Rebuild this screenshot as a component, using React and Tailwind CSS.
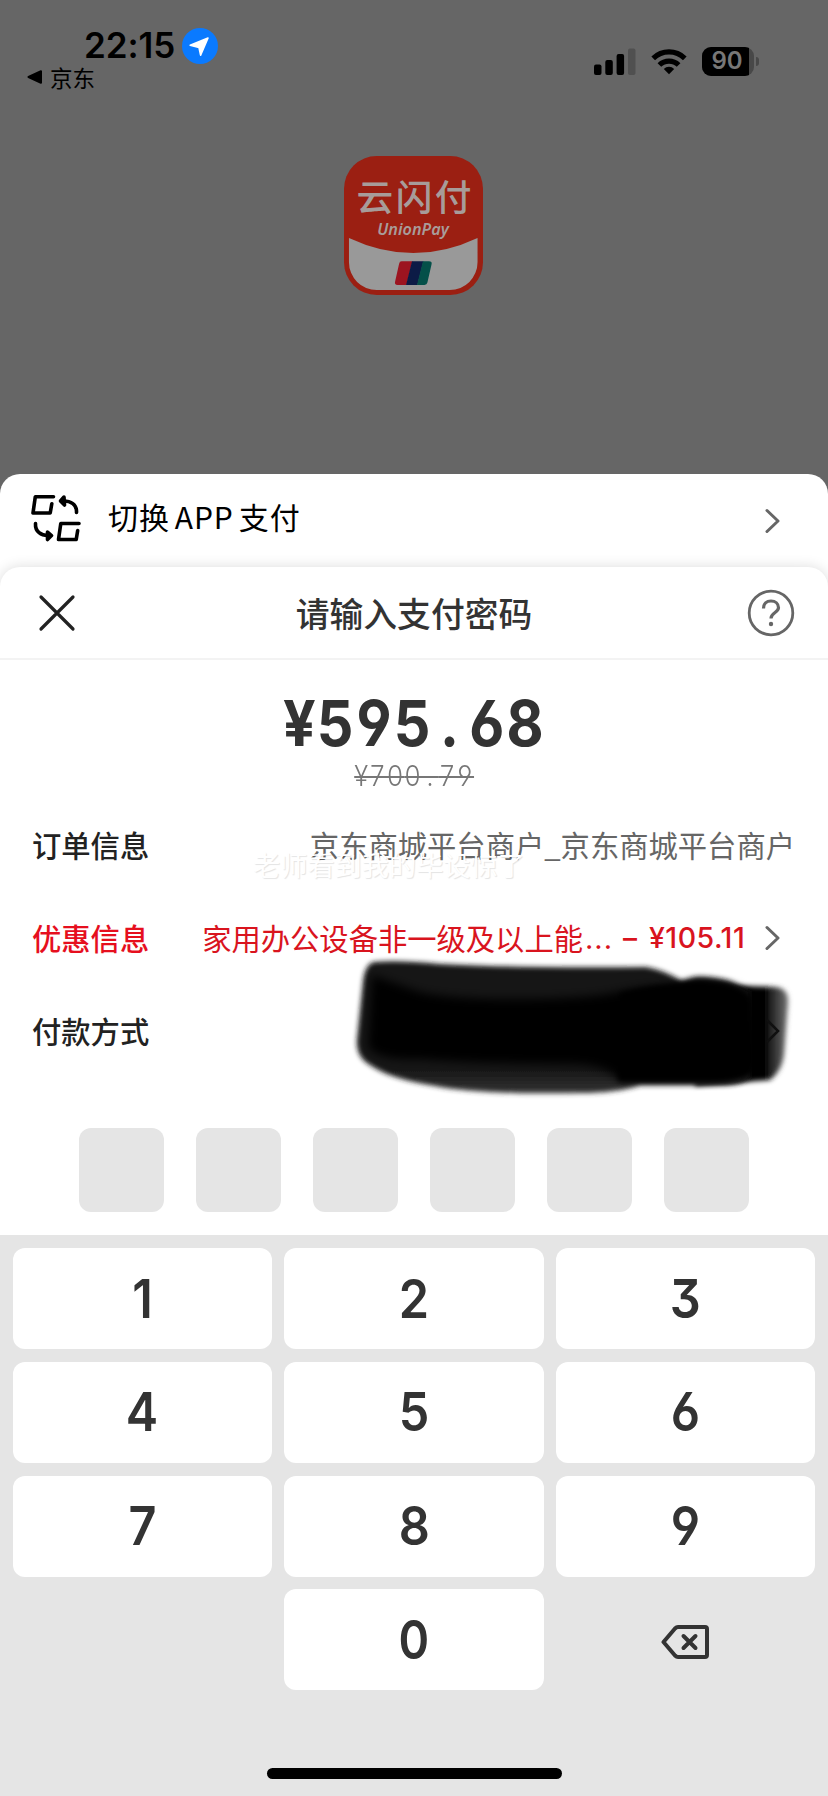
const PIN_SLOTS = [0, 1, 2, 3, 4, 5];
const KEYS = ['1', '2', '3', '4', '5', '6', '7', '8', '9'];

function Chevron({ className = '' }) {
  return (
    <svg viewBox="0 0 16 26" fill="none" stroke="currentColor" strokeWidth="3" strokeLinecap="round" strokeLinejoin="round" className={`w-4 h-[26px] shrink-0 ${className}`}>
      <path d="M2 2.5 13 13 2 23.5" />
    </svg>
  );
}

function StatusBar() {
  return (
    <div className="relative flex justify-between h-[110px] text-black">
      <div className="pl-[27px] pt-[24px]">
        <div className="flex items-center h-[43px] pl-[57px]">
          <span className="w-[93px] font-['Inter'] font-semibold text-[35px] leading-none tracking-[-0.1px]">22:15</span>
          <svg viewBox="0 0 36 36" className="w-9 h-9 ml-[5px]">
            <circle cx="18" cy="18" r="18" fill="#0a7aff" />
            <path d="M26 10 18.6 27.2 17 19.6 8.2 17.2Z" fill="#fff" stroke="#fff" strokeWidth="1.6" strokeLinejoin="round" />
          </svg>
        </div>
        <div className="flex items-center h-[20px]">
          <svg viewBox="0 0 16 14" className="w-4 h-3.5">
            <path d="M1.5 7 14 1.2V12.8Z" stroke="#000" strokeWidth="2" strokeLinejoin="round" />
          </svg>
          <span className="ml-[7px] text-[22.5px] leading-none">京东</span>
        </div>
      </div>
      <div className="flex items-center h-[30px] mt-[46px] mr-[69px]">
        <svg viewBox="0 0 42 27" className="w-[42px] h-[27px]">
          <rect x="0" y="16.5" width="7.5" height="10.5" rx="2" />
          <rect x="11.3" y="12" width="7.5" height="15" rx="2" />
          <rect x="22.6" y="6" width="7.5" height="21" rx="2" />
          <rect x="34" y="0.5" width="7.5" height="26.5" rx="2" fill="#505050" />
        </svg>
        <svg viewBox="0 0 36 27" fill="none" stroke="#000" strokeWidth="5.2" className="w-9 h-[27px] ml-[15px]">
          <path d="M2.2 10.4a22.6 22.6 0 0 1 31.6 0" />
          <path d="M8.4 17a13.8 13.8 0 0 1 19.2 0" />
          <path d="M18 26.2l-5.2-5.3a7.4 7.4 0 0 1 10.4 0z" fill="#000" stroke="none" />
        </svg>
        <div className="flex items-center ml-[15px]">
          <div className="w-[52px] h-[29px] rounded-[9px] overflow-hidden bg-[#484848]">
            <div className="w-[47px] h-full bg-black flex items-center justify-center pl-[3px] text-[#777] font-['Inter'] font-semibold text-[24px] leading-none tracking-[-0.2px]">90</div>
          </div>
          <div className="w-[3px] h-[9px] ml-[2px] rounded-r-full bg-[#484848]" />
        </div>
      </div>
    </div>
  );
}

function Logo() {
  return (
    <svg viewBox="0 0 140 140" className="w-[139px] h-[139px] ml-[344px] mt-[46px]">
      <rect x="0" y="0" width="140" height="140" rx="33" fill="#9b1f12" />
      <path d="M5 82.5Q70 113 134.5 82.5V107A28 28 0 0 1 106.5 135H33A28 28 0 0 1 5 107Z" fill="#999" />
      <text x="12.5" y="55.5" textLength="116" fontSize="37" fontWeight="500" fill="#a79c9a" fontFamily="Noto Sans CJK SC, sans-serif">云闪付</text>
      <text x="33.5" y="80" textLength="72" lengthAdjust="spacingAndGlyphs" fontSize="17" fontWeight="600" fontStyle="italic" fill="#a99c9a" fontFamily="Noto Sans, sans-serif">UnionPay</text>
      <path d="M58 106H69L63 130H54Q50.5 130 51.5 126.5L55.5 108.5Q56 106 58 106Z" fill="#9c1420" />
      <path d="M68.5 106H80L74 130H62.5Z" fill="#0c1b46" />
      <path d="M79.5 106H85.5Q89 106 88.2 109L84 127.5Q83.5 130 81 130H73.5Z" fill="#045049" />
    </svg>
  );
}

function SwitchIcon() {
  return (
    <svg viewBox="0 0 50 48" fill="none" stroke="#000" strokeWidth="3.6" strokeLinecap="round" strokeLinejoin="round" className="w-[50px] h-12 mb-[6px]">
      <path d="M22.5 2.8H4.3L2 19H19.2L20.8 9.8" />
      <path d="M48 29.5H29.8L27.5 45.500H45.2L46.7 36.5" />
      <path d="M45.5 18.5C46 10.5 40 6.5 31 7" />
      <path d="M33 3 29.500 7 33.500 11Z" fill="#000" />
      <path d="M4.5 29.5C4 37.5 10 42 18 41.5" />
      <path d="M16.5 38 20.500 41.5 16.5 45.500Z" fill="#000" />
    </svg>
  );
}

// Marker strokes that hide the bank card
function Scribble() {
  return (
    <svg viewBox="0 0 450 150" className="absolute left-[350px] top-[955px] w-[450px] h-[150px] pointer-events-none">
      <defs>
        <filter id="soft" x="-10%" y="-10%" width="120%" height="120%"><feGaussianBlur stdDeviation="2.6" /></filter>
        <filter id="softer" x="-10%" y="-20%" width="120%" height="140%"><feGaussianBlur stdDeviation="5" /></filter>
        <linearGradient id="edge" x1="0.75" x2="1">
          <stop offset="0" stopColor="#000" />
          <stop offset="0.4" stopColor="#303030" />
          <stop offset="1" stopColor="#707070" />
        </linearGradient>
        <linearGradient id="band" x1="0" x2="0" y1="0" y2="1">
          <stop offset="0" stopColor="#141414" />
          <stop offset="0.8" stopColor="#141414" />
          <stop offset="1" stopColor="#333" />
        </linearGradient>
      </defs>
      <path d="M345 31Q385 30 425 32Q439 33 438 48L434 100Q432 116 420 125L345 131Z" fill="url(#edge)" filter="url(#soft)" />
      <path d="M24 7Q50 5 90 9Q160 13 296 12Q314 15 332 26L345 22Q360 21 380 26L400 36V122Q392 130 375 130H290Q268 138 230 138Q130 140 85 131Q40 124 20 110Q6 102 7 85L13 27Q15 9 24 7Z" fill="url(#band)" filter="url(#soft)" />
      <path d="M22 20Q50 30 70 37Q100 44 160 44Q230 44 262 38Q300 29 328 31Q345 24 362 28Q390 30 402 42L407 110Q392 125 360 125L270 126Q258 109 220 109Q110 108 70 104Q28 106 18 92Z" fill="#000" filter="url(#softer)" />
      <path d="M270 38Q310 28 345 27Q380 26 398 42L402 118Q388 126 365 126H268Z" fill="#000" filter="url(#soft)" />
      <path d="M417 65 428 76 417 87" fill="none" stroke="#101010" strokeWidth="2.5" />
    </svg>
  );
}

function Row({ label, labelClass, children }) {
  return (
    <div className="flex items-center justify-between h-[93px] pl-8">
      <span className={`pb-[1px] text-[29.3px] leading-none font-medium whitespace-nowrap ${labelClass}`}>{label}</span>
      {children}
    </div>
  );
}

export default function App() {
  return (
    <div className="relative w-[828px] h-[1796px] overflow-hidden bg-[#666] font-['Noto_Sans_CJK_SC',sans-serif]">
      <div className="h-[474px]">
        <StatusBar />
        <Logo />
      </div>

      <div className="h-[1322px] rounded-t-[20px] bg-white overflow-hidden">
        <div className="flex items-center h-[93px] pl-[31px] pr-[47px]">
          <SwitchIcon />
          <span className="ml-[27px] pb-[9px] text-[30px] leading-none tracking-[0.9px] text-black">
            切换<span className="mx-[5px]">APP</span>支付
          </span>
          <Chevron className="ml-auto text-[#666]" />
        </div>

        <div className="h-[668px] rounded-t-[20px] bg-white shadow-[0_0_14px_rgba(0,0,0,0.14)]">
          <div className="flex items-center justify-between h-[93px] px-[33px] border-b-2 border-[#f3f3f3]">
            <svg viewBox="0 0 48 48" className="w-12 h-12 mt-[1px]" fill="none" stroke="#222" strokeWidth="3.2" strokeLinecap="round">
              <path d="M8 8 40 40M40 8 8 40" />
            </svg>
            <h1 className="text-[33.8px] leading-none font-medium text-[#333]">请输入支付密码</h1>
            <svg viewBox="0 0 48 48" className="w-12 h-12 mt-[1px]" fill="none" stroke="#666" strokeWidth="2.8">
              <circle cx="24" cy="24" r="21.8" />
              <path d="M16.5 19.5C16.5 14.5 19.6 12 24 12S31.5 14.8 31.5 18.8C31.5 23.6 24 23.5 24 29.5" strokeWidth="3.2" />
              <circle cx="24" cy="35" r="2.2" fill="#666" stroke="none" />
            </svg>
          </div>

          <div className="flex flex-col items-center h-[139px] pt-[31px] font-['Inter']">
            <div className="h-[64px] scale-x-[0.91] text-[63px] leading-[64px] font-bold text-[#333] tracking-[1.5px] whitespace-nowrap [font-feature-settings:'tnum','cv03','cv04']">
              ¥59<span className="tracking-[12px]">5.</span>68
            </div>
            <div className="h-[40px] scale-x-[0.92] text-[28px] leading-[42px] font-light text-[#777] tracking-[1px] line-through whitespace-nowrap [font-feature-settings:'tnum','cv03','cv04']">
              ¥70<span className="tracking-[6px]">0.</span>79
            </div>
          </div>

          <Row label="订单信息" labelClass="text-[#222]">
            <span className="mr-[33px] pb-[1px] text-[29.3px] leading-none text-[#666] whitespace-nowrap">京东商城平台商户_京东商城平台商户</span>
          </Row>
          <Row label="优惠信息" labelClass="text-[#e60f1e]">
            <div className="flex items-center mr-[47px] text-[#d9141e] whitespace-nowrap">
              <span className="pb-[1px] text-[29.3px] leading-none">家用办公设备非一级及以上能</span>
              <span className="w-[38px] pl-[2px] text-[29px] leading-none font-['Inter'] tracking-[1px]">...</span>
              <span className="w-[28px] pl-[2px] text-[28px] leading-none font-['Inter'] font-medium">–</span>
              <span className="w-[98px] text-[28.5px] leading-none font-['Inter'] font-medium tracking-[0.5px]">¥105.11</span>
              <Chevron className="ml-[18px] text-[#666]" />
            </div>
          </Row>
          <Row label="付款方式" labelClass="text-[#222]" />

          <div className="flex gap-[32.6px] mt-[50px] ml-[79px]">
            {PIN_SLOTS.map((i) => (
              <div key={i} className="w-[84.5px] h-[84px] rounded-xl bg-[#e5e5e5]" />
            ))}
          </div>
        </div>

        <div className="relative h-[561px] bg-[#e5e5e5] px-[12.5px] pt-[13px]">
          <div className="grid grid-cols-3 gap-x-3 gap-y-[12.8px] font-['Inter'] font-semibold text-[54px] leading-none text-[#333] [font-feature-settings:'cv03','cv04','cv09']">
            {KEYS.map((k) => (
              <button key={k} className="h-[101px] rounded-xl bg-white">
                <span className="inline-block scale-x-[0.9]">{k}</span>
              </button>
            ))}
            <button className="col-start-2 h-[101px] rounded-xl bg-white">
              <span className="inline-block scale-x-[0.86]">0</span>
            </button>
            <button className="flex items-center justify-center h-[101px]">
              <svg viewBox="0 0 48 34" fill="none" stroke="#333" strokeWidth="4" strokeLinejoin="round" strokeLinecap="round" className="w-12 h-[34px] mt-[4px] mr-[2px]">
                <path d="M17 2H44Q46 2 46 4V30Q46 32 44 32H17Q15.5 32 14 30.5L2.5 17 14 3.5Q15.5 2 17 2Z" />
                <path d="M22.5 11 34.5 23M34.5 11 22.5 23" />
              </svg>
            </button>
          </div>
          <div className="absolute left-[267px] bottom-[17px] w-[295px] h-[11px] rounded-full bg-black" />
        </div>
      </div>

      <div className="absolute left-[253px] top-[849px] text-[27.2px] leading-[30px] text-white whitespace-nowrap [text-shadow:1px_1px_1px_rgba(0,0,0,0.11)]">老师看到我的毕设惊了</div>
      <Scribble />
    </div>
  );
}
